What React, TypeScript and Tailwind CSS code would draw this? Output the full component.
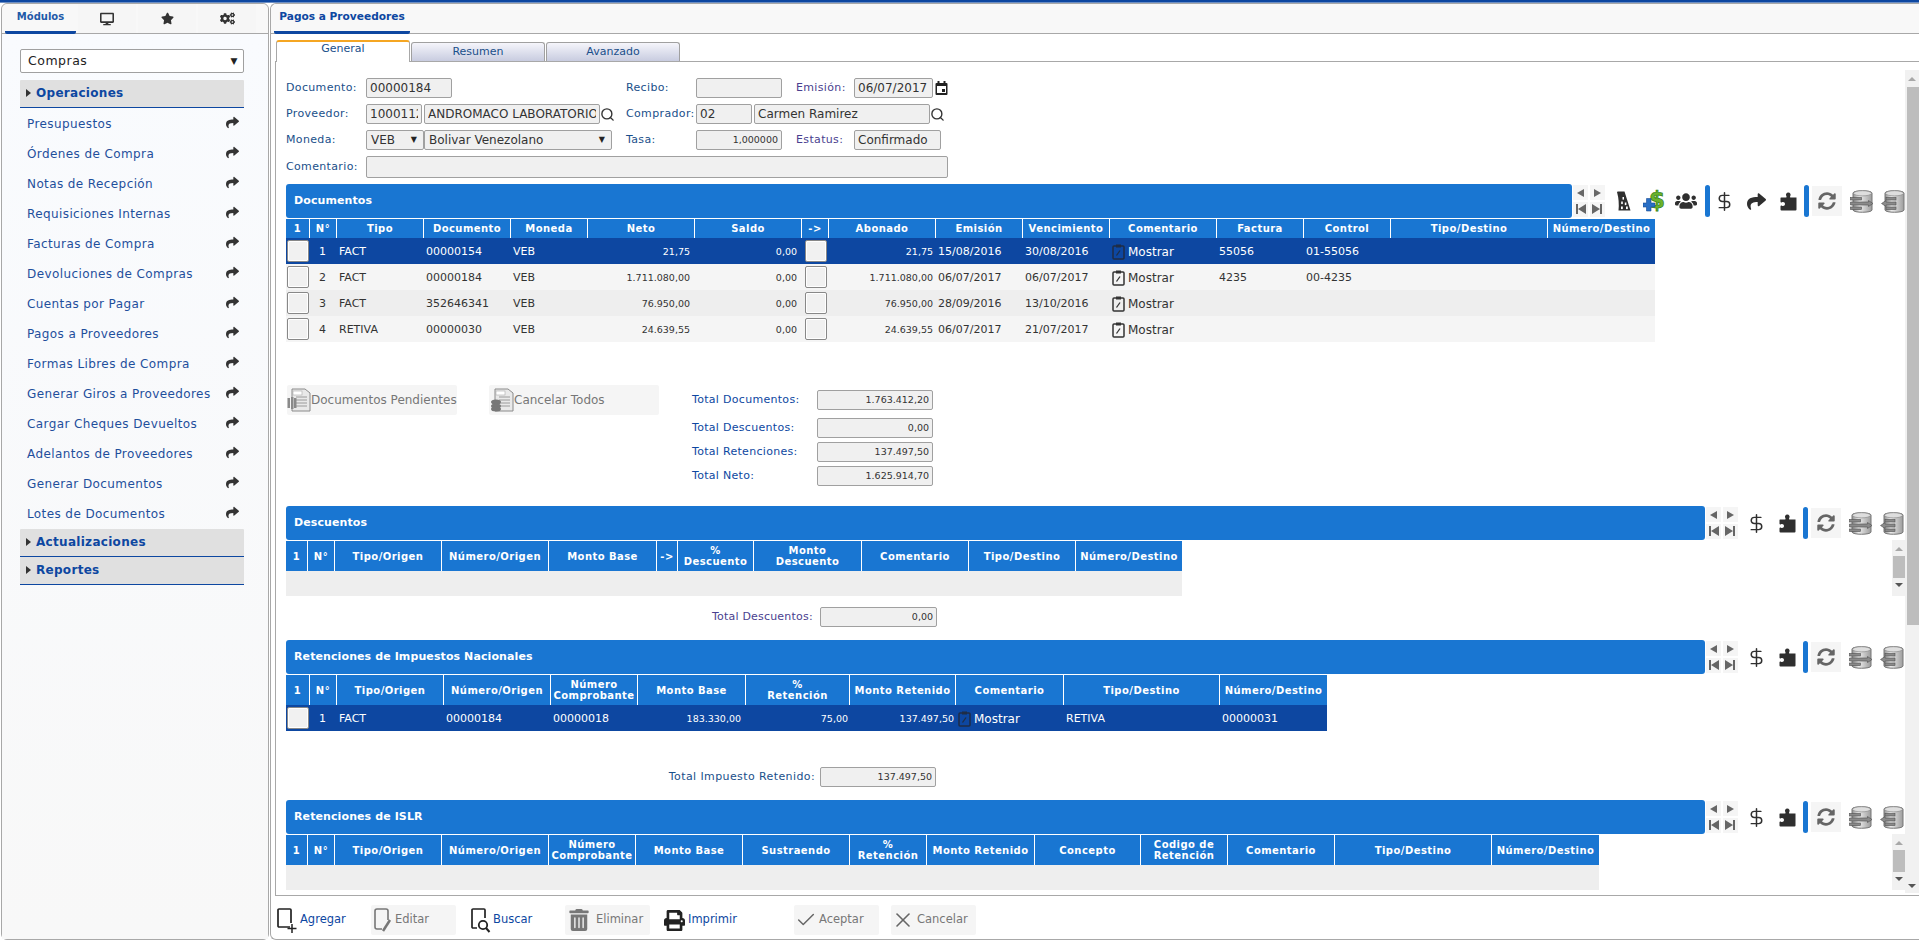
import React from "react";
import { FaDesktop, FaStar, FaCogs, FaUsers, FaShare, FaSyncAlt, FaPrint, FaTrashAlt } from "react-icons/fa";
import { DollarSign, Check, X, Search } from "lucide-react";

const menu = ["Presupuestos", "Órdenes de Compra", "Notas de Recepción", "Requisiciones Internas", "Facturas de Compra", "Devoluciones de Compras", "Cuentas por Pagar", "Pagos a Proveedores", "Formas Libres de Compra", "Generar Giros a Proveedores", "Cargar Cheques Devueltos", "Adelantos de Proveedores", "Generar Documentos", "Lotes de Documentos"];

function Caret() {
  return <span className="w-0 h-0 border-y-[4px] border-y-transparent border-l-[5px] border-l-[#333] ml-[6px] mr-[5px]" />;
}

function Section({ label }: { label: string }) {
  return (
    <div className="h-[28px] flex items-center bg-[#e0e0e0] border-b border-[#0d47a1] text-[#0d47a1] font-bold text-[12px] tracking-[0.3px] rounded-t-[1px] pb-[2px]">
      <Caret />
      <span>{label}</span>
    </div>
  );
}

function Clipboard({ dark }: { dark?: boolean }) {
  return (
    <svg width="13" height="16" viewBox="0 0 13 16" className="shrink-0">
      <rect x="1" y="2" width="11" height="13" rx="1" fill="none" stroke={dark ? "#1f2d45" : "#333"} strokeWidth="1.5" />
      <rect x="4" y="0.5" width="5" height="3" fill={dark ? "#1f2d45" : "#333"} />
      <path d="M4.5 11.5 L8 6.5" stroke={dark ? "#1f2d45" : "#333"} strokeWidth="1.3" />
    </svg>
  );
}

function Database({ flip }: { flip?: boolean }) {
  const id = flip ? "dbg2" : "dbg1";
  return (
    <svg width="24" height="25" viewBox="0 0 24 25" className="shrink-0">
      <defs>
        <linearGradient id={id} x1="0" x2="1" y1="0" y2="0">
          <stop offset="0" stopColor="#8f8f8f" />
          <stop offset="0.35" stopColor="#ececec" />
          <stop offset="1" stopColor="#9c9c9c" />
        </linearGradient>
      </defs>
      <path d={flip ? "M4 4 C4 1 23 1 23 4 V21 C23 24 4 24 4 21 Z" : "M3 4 C3 1 22 1 22 4 V21 C22 24 3 24 3 21 Z"} fill={`url(#${id})`} stroke="#777" strokeWidth="1" />
      <ellipse cx={flip ? 13.5 : 12.5} cy="4.3" rx="9" ry="2.6" fill="#dedede" stroke="#8a8a8a" strokeWidth=".7" />
      {flip ? (
        <g fill="#8a8a8a" stroke="#4f4f4f" strokeWidth=".6">
          <path d="M0.5 14.5 L5 11.5 V13 H15 V16 H5 V17.5 Z" />
          <rect x="5" y="8.5" width="10" height="2.5" />
          <rect x="5" y="18" width="10" height="2.5" />
        </g>
      ) : (
        <g fill="#8a8a8a" stroke="#4f4f4f" strokeWidth=".6">
          <path d="M23 14.5 L18.5 11.5 V13 H0.5 V16 H18.5 V17.5 Z" />
          <rect x="0.5" y="8.5" width="11" height="2.5" />
          <rect x="0.5" y="18" width="11" height="2.5" />
        </g>
      )}
    </svg>
  );
}

function NavButtons() {
  const c = "flex items-center justify-center w-[15px] h-[15px] bg-[#f5f5f5]";
  return (
    <div className="grid grid-cols-2 w-[32px] h-[32px] gap-x-[1px] gap-y-[1px] shrink-0">
      <div className={c}><svg width="10" height="10" viewBox="0 0 10 10"><path d="M8 1 V9 L1 5 Z" fill="#666" /></svg></div>
      <div className={c}><svg width="10" height="10" viewBox="0 0 10 10"><path d="M2 1 V9 L9 5 Z" fill="#666" /></svg></div>
      <div className={c}><svg width="12" height="10" viewBox="0 0 12 10"><path d="M1 0 H3 V10 H1 Z M11 0 V10 L3 5 Z" fill="#666" /></svg></div>
      <div className={c}><svg width="12" height="10" viewBox="0 0 12 10"><path d="M11 0 H9 V10 H11 Z M1 0 V10 L9 5 Z" fill="#666" /></svg></div>
    </div>
  );
}

function Sep({ className = "" }: { className?: string }) {
  return <div className={`w-[5px] h-[32px] rounded-[3px] bg-[#1976d2] shrink-0 ${className}`} />;
}

function Road() {
  return (
    <svg width="15" height="20" viewBox="0 0 15 20">
      <path d="M1 1 Q1 0.5 2 0.5 H8.5 L14.5 19.5 H2.5 Q3.5 10 1 1 Z" fill="#2f2f2f" />
      <rect x="6.5" y="6" width="1.5" height="2.6" fill="#fff" />
      <rect x="5.2" y="10.5" width="1.6" height="2.6" fill="#fff" />
      <rect x="8.8" y="11.5" width="1.6" height="2.6" fill="#fff" />
      <rect x="5" y="15.5" width="1.8" height="2.6" fill="#fff" />
      <rect x="10" y="15.5" width="1.8" height="2.6" fill="#fff" />
    </svg>
  );
}

function Puzzle() {
  return (
    <svg width="17" height="19" viewBox="0 0 17 19">
      <path d="M1 5.5 H5.8 C6.6 5.5 6.8 4.8 6.3 4 C5.4 2.5 6.4 0.5 8.3 0.5 C10.2 0.5 11.2 2.5 10.3 4 C9.8 4.8 10 5.5 10.8 5.5 H16.5 V17.5 Q16.5 18.5 15.5 18.5 H1.5 Q0.5 18.5 0.5 17.5 V14.2 C0.5 13.5 1.3 13.3 2 13.7 C3.4 14.5 5 13.5 5 12 C5 10.5 3.4 9.5 2 10.3 C1.3 10.7 0.5 10.5 0.5 9.8 V6 Q0.5 5.5 1 5.5 Z" fill="#2f2f2f" />
    </svg>
  );
}

function DollarAdd() {
  return (
    <svg width="24" height="24" viewBox="0 0 24 24">
      <text x="14" y="19" textAnchor="middle" fontFamily="'DejaVu Sans', sans-serif" fontWeight="bold" fontSize="23" fill="#6cb32a" stroke="#2f7d14" strokeWidth=".7">$</text>
      <path d="M3.5 12.5 H8 V17 H12 V21 H8 V25 H3.5 V21 H0 V17 H3.5 Z" transform="translate(0 -3)" fill="#2a6fc4" stroke="#164a96" strokeWidth=".6" />
    </svg>
  );
}

function Head({ title, width, extra }: { title: string; width: string; extra?: boolean }) {
  return (
    <div className="flex h-[34px] items-center">
      <div className={`${width} shrink-0 h-[34px] rounded-[3px] bg-[#1976d2] text-white font-bold text-[11px] tracking-[0.1px] flex items-center pl-[8px]`}>{title}</div>
      <div className="w-[1px] shrink-0" />
      <NavButtons />
      {extra ? (
        <div className="flex items-center shrink-0">
          <div className="w-[38px] flex justify-center ml-[-1px]"><Road /></div>
          <div className="w-[25px] flex justify-center"><DollarAdd /></div>
          <div className="w-[38px] flex justify-center"><FaUsers className="text-[#2f2f2f] text-[22px]" /></div>
          <Sep />
        </div>
      ) : (
        <div className="w-[1px] shrink-0" />
      )}
      <div className={`${extra ? "w-[28px]" : "w-[34px]"} flex justify-center shrink-0`}><DollarSign size={21} strokeWidth={1.7} className="text-[#2f2f2f]" /></div>
      {extra ? <div className="w-[36px] flex justify-center shrink-0"><FaShare className="text-[#2f2f2f] text-[19px]" /></div> : null}
      <div className="w-[28px] flex justify-center shrink-0"><Puzzle /></div>
      <Sep className="ml-[2px]" />
      <div className="ml-[3px] w-[30px] h-[30px] bg-[#f5f5f5] flex items-center justify-center shrink-0"><FaSyncAlt className="text-[#666] text-[18px]" /></div>
      <div className="w-[38px] flex justify-center pl-[1px] shrink-0"><Database /></div>
      <div className="w-[25px] flex justify-center shrink-0"><Database flip /></div>
    </div>
  );
}

function THead({ cols, h }: { cols: [string, number][]; h: string }) {
  return (
    <div className={`flex w-fit ${h} bg-[#1976d2] text-white font-bold text-[10px] tracking-[0.45px] leading-[11px] mt-[1px]`}>
      {cols.map(([t, w], i) => (
        <div key={i} style={{ width: w }} className="flex items-center justify-center text-center border-r border-white last:border-r-0 shrink-0 whitespace-pre-line px-[1px]">{t}</div>
      ))}
    </div>
  );
}

function RowBtn() {
  return <div className="w-[22px] h-[22px] -mt-[2px] bg-[#f1f1f1] border border-[#888] rounded-[2px] shadow-[inset_0_0_0_1px_#fff]" />;
}

function Field({ text, w, right, small }: { text?: string; w: string; right?: boolean; small?: boolean }) {
  return (
    <div className={`${w} h-[20px] shrink-0 bg-[#f0f0f0] border border-[#a0a0a0] rounded-[2px] text-[#333] flex items-center px-[3px] ${right ? "justify-end" : ""} ${small ? "text-[9.5px]" : "text-[12px]"}`}>
      <span className="block overflow-hidden whitespace-nowrap">{text}</span>
    </div>
  );
}

function SelectBox({ text, w }: { text: string; w: string }) {
  return (
    <div className={`${w} h-[20px] shrink-0 bg-[#f0f0f0] border border-[#a0a0a0] rounded-[2px] text-[#333] text-[12px] flex items-center justify-between pl-[4px] pr-[6px]`}>
      <span>{text}</span><span className="text-[8px] text-[#222]">▼</span>
    </div>
  );
}

function Label({ text, w, violet }: { text: string; w: string; violet?: boolean }) {
  return <div className={`${w} shrink-0 text-[11px] tracking-[0.35px] ${violet ? "text-[#4a3f8f]" : "text-[#1a4f8a]"} whitespace-nowrap`}>{text}</div>;
}

function ToolBtn({ icon, label, disabled, w }: { icon: React.ReactNode; label: string; disabled?: boolean; w: string }) {
  return (
    <div className={`${w} h-[30px] shrink-0 flex items-center rounded-[2px] text-[11.5px] ${disabled ? "bg-[#f5f5f5] text-[#777]" : "text-[#0d47a1]"}`}>
      {icon}<span>{label}</span>
    </div>
  );
}

function DocIcon({ coins }: { coins?: boolean }) {
  return (
    <svg width="24" height="24" viewBox="0 0 24 24" className="shrink-0">
      <path d="M5 1 H18 L23 5 V23 H5 Z" fill="#e9e9e9" stroke="#8a8a8a" />
      <g stroke="#9a9a9a"><path d="M9 9 H20 M9 12 H20 M9 15 H20 M9 18 H20" /></g>
      <rect x="6" y="3" width="9" height="4" fill="#fff" stroke="#aaa" strokeWidth=".6" />
      {coins ? <g fill="#777"><ellipse cx="6" cy="14" rx="5" ry="2.5" /><ellipse cx="6" cy="18" rx="5" ry="2.5" /><ellipse cx="6" cy="21" rx="5" ry="2.5" /></g>
        : <g fill="#8a8a8a"><rect x="0.5" y="10" width="2.5" height="10" /><rect x="4" y="9" width="2.5" height="12" /><rect x="7" y="10" width="2.5" height="10" /></g>}
    </svg>
  );
}

function Row({ cells, sel, alt }: { cells: { n: string; t: string; d: string; net: string; sal: string; ab: string; em: string; ve: string; fa: string; co: string }; sel?: boolean; alt?: boolean }) {
  const base = sel ? "bg-[#0d47a1] text-white" : alt ? "bg-[#eeeeee] text-[#333]" : "bg-[#f5f5f5] text-[#333]";
  return (
    <div className={`flex h-[26px] items-center pt-[2px] text-[11px] ${base}`}>
      <div className="w-[24px] shrink-0 flex justify-center"><RowBtn /></div>
      <div className="w-[27px] shrink-0 pl-[9px]">{cells.n}</div>
      <div className="w-[87px] shrink-0 pl-[2px]">{cells.t}</div>
      <div className="w-[87px] shrink-0 pl-[2px]">{cells.d}</div>
      <div className="w-[77px] shrink-0 pl-[2px]">VEB</div>
      <div className="w-[107px] shrink-0 text-right pr-[5px] text-[9.5px]">{cells.net}</div>
      <div className="w-[107px] shrink-0 text-right pr-[5px] text-[9.5px]">{cells.sal}</div>
      <div className="w-[27px] shrink-0 flex justify-center"><RowBtn /></div>
      <div className="w-[107px] shrink-0 text-right pr-[3px] text-[9.5px]">{cells.ab}</div>
      <div className="w-[87px] shrink-0 pl-[2px]">{cells.em}</div>
      <div className="w-[87px] shrink-0 pl-[2px]">{cells.ve}</div>
      <div className="w-[107px] shrink-0 pl-[2px] flex items-center gap-[3px] text-[12px]"><Clipboard dark={sel} /><span>Mostrar</span></div>
      <div className="w-[87px] shrink-0 pl-[2px]">{cells.fa}</div>
      <div className="w-[87px] shrink-0 pl-[2px]">{cells.co}</div>
      <div className="w-[264px] shrink-0" />
    </div>
  );
}

function MiniScroll() {
  return (
    <div className="absolute right-[14px] w-[13px] h-[56px] bg-[#f1f1f1] flex flex-col items-center">
      <span className="mt-[7px] w-0 h-0 border-x-[4px] border-x-transparent border-b-[4px] border-b-[#a8a8a8]" />
      <span className="mt-[5px] w-full ml-[2px] h-[22px] bg-[#bdbdbd]" />
      <span className="mt-[5px] w-0 h-0 border-x-[4px] border-x-transparent border-t-[4px] border-t-[#555]" />
    </div>
  );
}

const docCols: [string, number][] = [["1", 24], ["N°", 27], ["Tipo", 87], ["Documento", 87], ["Moneda", 77], ["Neto", 107], ["Saldo", 107], ["->", 27], ["Abonado", 107], ["Emisión", 87], ["Vencimiento", 87], ["Comentario", 107], ["Factura", 87], ["Control", 87], ["Tipo/Destino", 157], ["Número/Destino", 107]];
const desCols: [string, number][] = [["1", 22], ["N°", 27], ["Tipo/Origen", 107], ["Número/Origen", 107], ["Monto Base", 108], ["->", 21], ["%\nDescuento", 76], ["Monto\nDescuento", 108], ["Comentario", 107], ["Tipo/Destino", 107], ["Número/Destino", 106]];
const retCols: [string, number][] = [["1", 24], ["N°", 27], ["Tipo/Origen", 107], ["Número/Origen", 107], ["Número\nComprobante", 87], ["Monto Base", 108], ["%\nRetención", 104], ["Monto Retenido", 106], ["Comentario", 108], ["Tipo/Destino", 156], ["Número/Destino", 107]];
const islCols: [string, number][] = [["1", 22], ["N°", 27], ["Tipo/Origen", 107], ["Número/Origen", 107], ["Número\nComprobante", 87], ["Monto Base", 107], ["Sustraendo", 107], ["%\nRetención", 77], ["Monto Retenido", 108], ["Concepto", 106], ["Codigo de\nRetención", 87], ["Comentario", 107], ["Tipo/Destino", 157], ["Número/Destino", 107]];

const rows = [
  { n: "1", t: "FACT", d: "00000154", net: "21,75", sal: "0,00", ab: "21,75", em: "15/08/2016", ve: "30/08/2016", fa: "55056", co: "01-55056" },
  { n: "2", t: "FACT", d: "00000184", net: "1.711.080,00", sal: "0,00", ab: "1.711.080,00", em: "06/07/2017", ve: "06/07/2017", fa: "4235", co: "00-4235" },
  { n: "3", t: "FACT", d: "352646341", net: "76.950,00", sal: "0,00", ab: "76.950,00", em: "28/09/2016", ve: "13/10/2016", fa: "", co: "" },
  { n: "4", t: "RETIVA", d: "00000030", net: "24.639,55", sal: "0,00", ab: "24.639,55", em: "06/07/2017", ve: "21/07/2017", fa: "", co: "" },
];

export default function App() {
  return (
    <div className="w-[1919px] h-[942px] bg-white overflow-hidden flex flex-col font-['DejaVu_Sans',Verdana,sans-serif]">
      <div className="h-[3px] bg-[#0d47a1] shrink-0 border-b border-[#6d8fc4]" />
      <div className="flex flex-1 min-h-0 pb-[2px]">
        {/* Sidebar */}
        <aside className="w-[268px] ml-[1px] shrink-0 bg-[#f8f8f8] border border-[#a8a8a8] rounded-t-[6px] rounded-b-[6px] flex flex-col">
          <div className="h-[30px] flex shrink-0 border-b border-[#a8a8a8] bg-[#f8f8f8] rounded-t-[6px] items-stretch">
            <div className="w-[71px] ml-[3px] border-b-[3px] border-[#0d47a1] rounded-b-[2px] text-[10px] font-bold text-[#1f5aa8] flex items-center justify-center h-[30px] pb-[2px]">Módulos</div>
            <div className="w-[58px] ml-[2px] flex items-center justify-center bg-[#f6f6f6]"><FaDesktop className="text-[#333] text-[14px]" /></div>
            <div className="w-[58px] ml-[2px] flex items-center justify-center bg-[#f6f6f6]"><FaStar className="text-[#333] text-[13px]" /></div>
            <div className="w-[58px] ml-[2px] flex items-center justify-center bg-[#f6f6f6]"><FaCogs className="text-[#333] text-[15px]" /></div>
          </div>
          <div className="bg-gradient-to-b from-[#f9fbfe] to-[#f8f8f8] flex-1 pl-[18px] pr-[24px] pt-[15px]">
            <div className="h-[24px] w-[224px] bg-white border border-[#a0a0a0] rounded-[2px] text-[12.5px] tracking-[0.5px] text-[#222] flex items-center justify-between pl-[7px] pr-[5px] pt-[1px]">
              <span>Compras</span><span className="text-[9px]">▼</span>
            </div>
            <div className="h-[7px]" />
            <Section label="Operaciones" />
            <div className="flex flex-col pt-[1px]">
              {menu.map((m) => (
                <div key={m} className="h-[30px] flex items-center justify-between pl-[7px] pr-[5px] text-[12px] tracking-[0.4px] text-[#1f4f9c]">
                  <span className="whitespace-nowrap">{m}</span>
                  <FaShare className="text-[#333] text-[13px] -mt-[4px]" />
                </div>
              ))}
            </div>
            <Section label="Actualizaciones" />
            <Section label="Reportes" />
          </div>
        </aside>

        {/* Main */}
        <main className="flex-1 ml-[1px] mr-0 min-w-0 border border-[#a8a8a8] border-r-0 rounded-tl-[6px] rounded-bl-[6px] flex flex-col relative bg-white">
          <div className="h-[30px] shrink-0 border-b border-[#a8a8a8] bg-[#f8f8f8] rounded-tl-[6px] flex">
            <div className="ml-[3px] w-[136px] h-[30px] border-b-[3px] border-[#0d47a1] rounded-b-[2px] text-[10.6px] font-bold text-[#0d47a1] flex items-center justify-center pb-[2px] whitespace-nowrap">Pagos a Proveedores</div>
          </div>

          {/* Tabs */}
          <div className="flex h-[22px] mt-[5px] ml-[5px] shrink-0 items-end">
            <div className="w-[134px] h-[22px] bg-white border-t-[2px] border-[#f5a623] border-x border-x-[#a8a8a8] rounded-t-[3px] text-[11px] text-[#1a4f8a] flex items-center justify-center pb-[5px] relative z-10 -mb-[1px]">General</div>
            <div className="w-[134px] ml-[1px] h-[19px] bg-gradient-to-b from-[#f5f5fb] to-[#c8cce0] border border-b-0 border-[#a0a0a0] rounded-t-[3px] text-[11px] text-[#1a4f8a] flex items-center justify-center">Resumen</div>
            <div className="w-[134px] ml-[1px] h-[19px] bg-gradient-to-b from-[#f5f5fb] to-[#c8cce0] border border-b-0 border-[#a0a0a0] rounded-t-[3px] text-[11px] text-[#1a4f8a] flex items-center justify-center">Avanzado</div>
          </div>

          {/* Content */}
          <div className="ml-[4px] h-[835px] shrink-0 border border-[#a8a8a8] border-r-0 relative overflow-hidden pl-[10px] pt-[16px]">
            <div className="flex flex-col">
              <div className="flex items-center h-[20px]">
                <Label text="Documento:" w="w-[80px]" />
                <Field text="00000184" w="w-[86px]" />
                <div className="w-[174px]" />
                <Label text="Recibo:" w="w-[70px]" />
                <Field w="w-[86px]" />
                <div className="w-[14px]" />
                <Label text="Emisión:" w="w-[58px]" violet />
                <Field text="06/07/2017" w="w-[79px]" />
                <svg width="13" height="14" viewBox="0 0 13 14" className="ml-[2px]"><rect x="0.5" y="2" width="12" height="12" rx="1" fill="#222" /><rect x="2" y="5" width="9" height="7" fill="#fff" /><rect x="2.5" y="0" width="2" height="3" fill="#222" /><rect x="8.5" y="0" width="2" height="3" fill="#222" /><rect x="7" y="8" width="3" height="3" fill="#222" /></svg>
              </div>
              <div className="flex items-center h-[20px] mt-[6px]">
                <Label text="Proveedor:" w="w-[80px]" />
                <Field text="1000112" w="w-[56px]" />
                <div className="w-[2px]" />
                <Field text="ANDROMACO LABORATORIOS" w="w-[176px]" />
                <div className="w-[15px] flex justify-end"><Search size={15} strokeWidth={2.2} className="text-[#333]" /></div>
                <div className="w-[11px]" />
                <Label text="Comprador:" w="w-[70px]" />
                <Field text="02" w="w-[56px]" />
                <div className="w-[2px]" />
                <Field text="Carmen Ramirez" w="w-[176px]" />
                <Search size={15} strokeWidth={2.2} className="text-[#333]" />
              </div>
              <div className="flex items-center h-[20px] mt-[6px]">
                <Label text="Moneda:" w="w-[80px]" />
                <SelectBox text="VEB" w="w-[58px]" />
                <SelectBox text="Bolivar Venezolano" w="w-[188px]" />
                <div className="w-[14px]" />
                <Label text="Tasa:" w="w-[70px]" />
                <Field text="1,000000" w="w-[86px]" right small />
                <div className="w-[14px]" />
                <Label text="Estatus:" w="w-[58px]" violet />
                <Field text="Confirmado" w="w-[87px]" />
              </div>
              <div className="flex items-center h-[22px] mt-[6px]">
                <Label text="Comentario:" w="w-[80px]" />
                <div className="w-[582px] h-[22px] bg-[#f0f0f0] border border-[#a0a0a0] rounded-[2px]" />
              </div>
            </div>

            {/* Documentos */}
            <div className="mt-[6px]">
              <Head title="Documentos" width="w-[1286px]" extra />
              <THead cols={docCols} h="h-[19px]" />
              <div className="w-[1369px]">
                {rows.map((r, i) => <Row key={i} cells={r} sel={i === 0} alt={i === 2} />)}
              </div>
            </div>

            {/* Buttons + totals */}
            <div className="flex mt-[43px] h-[121px]">
              <div className="w-[170px] h-[30px] ml-[1px] bg-[#f5f5f5] rounded-[2px] flex items-center text-[12px] text-[#777] whitespace-nowrap overflow-hidden"><DocIcon />Documentos Pendientes</div>
              <div className="w-[170px] h-[30px] ml-[32px] bg-[#f5f5f5] rounded-[2px] flex items-center text-[12px] text-[#777] pl-[1px] whitespace-nowrap"><DocIcon coins />Cancelar Todos</div>
              <div className="ml-[33px] mt-[5px] flex flex-col">
                {[["Total Documentos:", "1.763.412,20", ""], ["Total Descuentos:", "0,00", "mt-[8px]"], ["Total Retenciones:", "137.497,50", "mt-[4px]"], ["Total Neto:", "1.625.914,70", "mt-[4px]"]].map(([l, v, m]) => (
                  <div key={l} className={`flex items-center h-[20px] ${m}`}>
                    <div className="w-[125px] text-[11px] tracking-[0.3px] text-[#0d47a1]">{l}</div>
                    <Field text={v} w="w-[116px]" right small />
                  </div>
                ))}
              </div>
            </div>

            {/* Descuentos */}
            <div>
              <Head title="Descuentos" width="w-[1419px]" />
              <MiniScroll />
              <THead cols={desCols} h="h-[30px]" />
              <div className="h-[25px] bg-[#eeeeee]" style={{ width: 896 }} />
              <div className="flex items-center h-[20px] mt-[11px] pl-[426px]">
                <div className="w-[108px] text-[11px] tracking-[0.2px] text-[#4a3f8f] whitespace-nowrap">Total Descuentos:</div>
                <Field text="0,00" w="w-[117px]" right small />
              </div>
            </div>

            {/* Retenciones */}
            <div className="mt-[13px]">
              <Head title="Retenciones de Impuestos Nacionales" width="w-[1419px]" />
              <THead cols={retCols} h="h-[30px]" />
              <div className="flex h-[26px] w-[1041px] bg-[#0d47a1] text-white items-center pt-[2px] text-[11px]">
                <div className="w-[24px] flex justify-center shrink-0"><RowBtn /></div>
                <div className="w-[27px] pl-[9px] shrink-0">1</div>
                <div className="w-[107px] pl-[2px] shrink-0">FACT</div>
                <div className="w-[107px] pl-[2px] shrink-0">00000184</div>
                <div className="w-[87px] pl-[2px] shrink-0">00000018</div>
                <div className="w-[108px] text-right pr-[5px] text-[9.5px] shrink-0">183.330,00</div>
                <div className="w-[104px] text-right pr-[2px] text-[9.5px] shrink-0">75,00</div>
                <div className="w-[106px] text-right pr-[2px] text-[9.5px] shrink-0">137.497,50</div>
                <div className="w-[108px] pl-[2px] flex items-center gap-[3px] text-[12px] shrink-0"><Clipboard dark /><span>Mostrar</span></div>
                <div className="w-[156px] pl-[2px] shrink-0">RETIVA</div>
                <div className="w-[107px] pl-[2px] shrink-0">00000031</div>
              </div>
              <div className="flex items-center justify-end h-[20px] mt-[36px] w-[650px]">
                <div className="text-[11px] tracking-[0.4px] text-[#1a4f8a] mr-[5px] whitespace-nowrap">Total Impuesto Retenido:</div>
                <Field text="137.497,50" w="w-[116px]" right small />
              </div>
            </div>

            {/* ISLR */}
            <div className="mt-[13px]">
              <Head title="Retenciones de ISLR" width="w-[1419px]" />
              <MiniScroll />
              <THead cols={islCols} h="h-[30px]" />
              <div className="h-[25px] bg-[#eeeeee]" style={{ width: 1313 }} />
            </div>

            {/* Page scrollbar */}
            <div className="absolute top-[8px] right-0 bottom-[2px] w-[14px] bg-[#f1f1f1] flex flex-col">
              <div className="h-[17px] flex justify-center pt-[7px]"><span className="w-0 h-0 border-x-[4px] border-x-transparent border-b-[4px] border-b-[#a8a8a8]" /></div>
              <div className="h-[538px] bg-[#bdbdbd] ml-[2px]" />
              <div className="mt-auto mb-[5px] flex justify-center"><span className="w-0 h-0 border-x-[4px] border-x-transparent border-t-[4px] border-t-[#555]" /></div>
            </div>
          </div>

          {/* Bottom toolbar */}
          <div className="flex items-center h-[30px] mt-[9px] pl-[6px] shrink-0">
            <ToolBtn w="w-[94px]" label="Agregar" icon={<svg width="20" height="26" viewBox="0 0 20 26" className="mr-[3px] mt-[2px]"><path d="M13 19 H2 A1 1 0 0 1 1 18 V2 A1 1 0 0 1 2 1 H13 A1 1 0 0 1 14 2 V15" fill="none" stroke="#222" strokeWidth="1.7" /><path d="M15 16 V25 M10.5 20.5 H19.5" stroke="#222" strokeWidth="1.5" /></svg>} />
            <ToolBtn w="w-[85px]" disabled label="Editar" icon={<svg width="20" height="24" viewBox="0 0 20 24" className="ml-[3px] mr-[1px]"><path d="M8 21 H3 A2 2 0 0 1 1 19 V3 A2 2 0 0 1 3 1 H12 A2 2 0 0 1 14 3 V12" fill="none" stroke="#777" strokeWidth="1.6" /><path d="M9 23 L16 12" stroke="#777" strokeWidth="2.5" /></svg>} />
            <div className="w-[15px]" />
            <ToolBtn w="w-[94px]" label="Buscar" icon={<svg width="20" height="26" viewBox="0 0 20 26" className="mr-[2px]"><path d="M6 21 H2 A1 1 0 0 1 1 20 V3 A1 1 0 0 1 2 2 H13 A1 1 0 0 1 14 3 V11" fill="none" stroke="#222" strokeWidth="1.7" /><circle cx="12" cy="18" r="4.2" fill="none" stroke="#222" strokeWidth="1.8" /><path d="M15 21 L18.5 25" stroke="#222" strokeWidth="2" /></svg>} />
            <ToolBtn w="w-[85px]" disabled label="Eliminar" icon={<FaTrashAlt className="text-[#777] text-[22px] ml-[3px] mr-[6px]" />} />
            <div className="w-[14px]" />
            <ToolBtn w="w-[130px]" label="Imprimir" icon={<FaPrint className="text-[#222] text-[21px] mr-[3px]" />} />
            <ToolBtn w="w-[85px]" disabled label="Aceptar" icon={<Check size={22} strokeWidth={1.6} className="text-[#666] ml-[1px] mr-[2px]" />} />
            <div className="w-[12px]" />
            <ToolBtn w="w-[85px]" disabled label="Cancelar" icon={<X size={24} strokeWidth={1.6} className="text-[#666] mr-[2px]" />} />
          </div>
        </main>
      </div>
    </div>
  );
}
